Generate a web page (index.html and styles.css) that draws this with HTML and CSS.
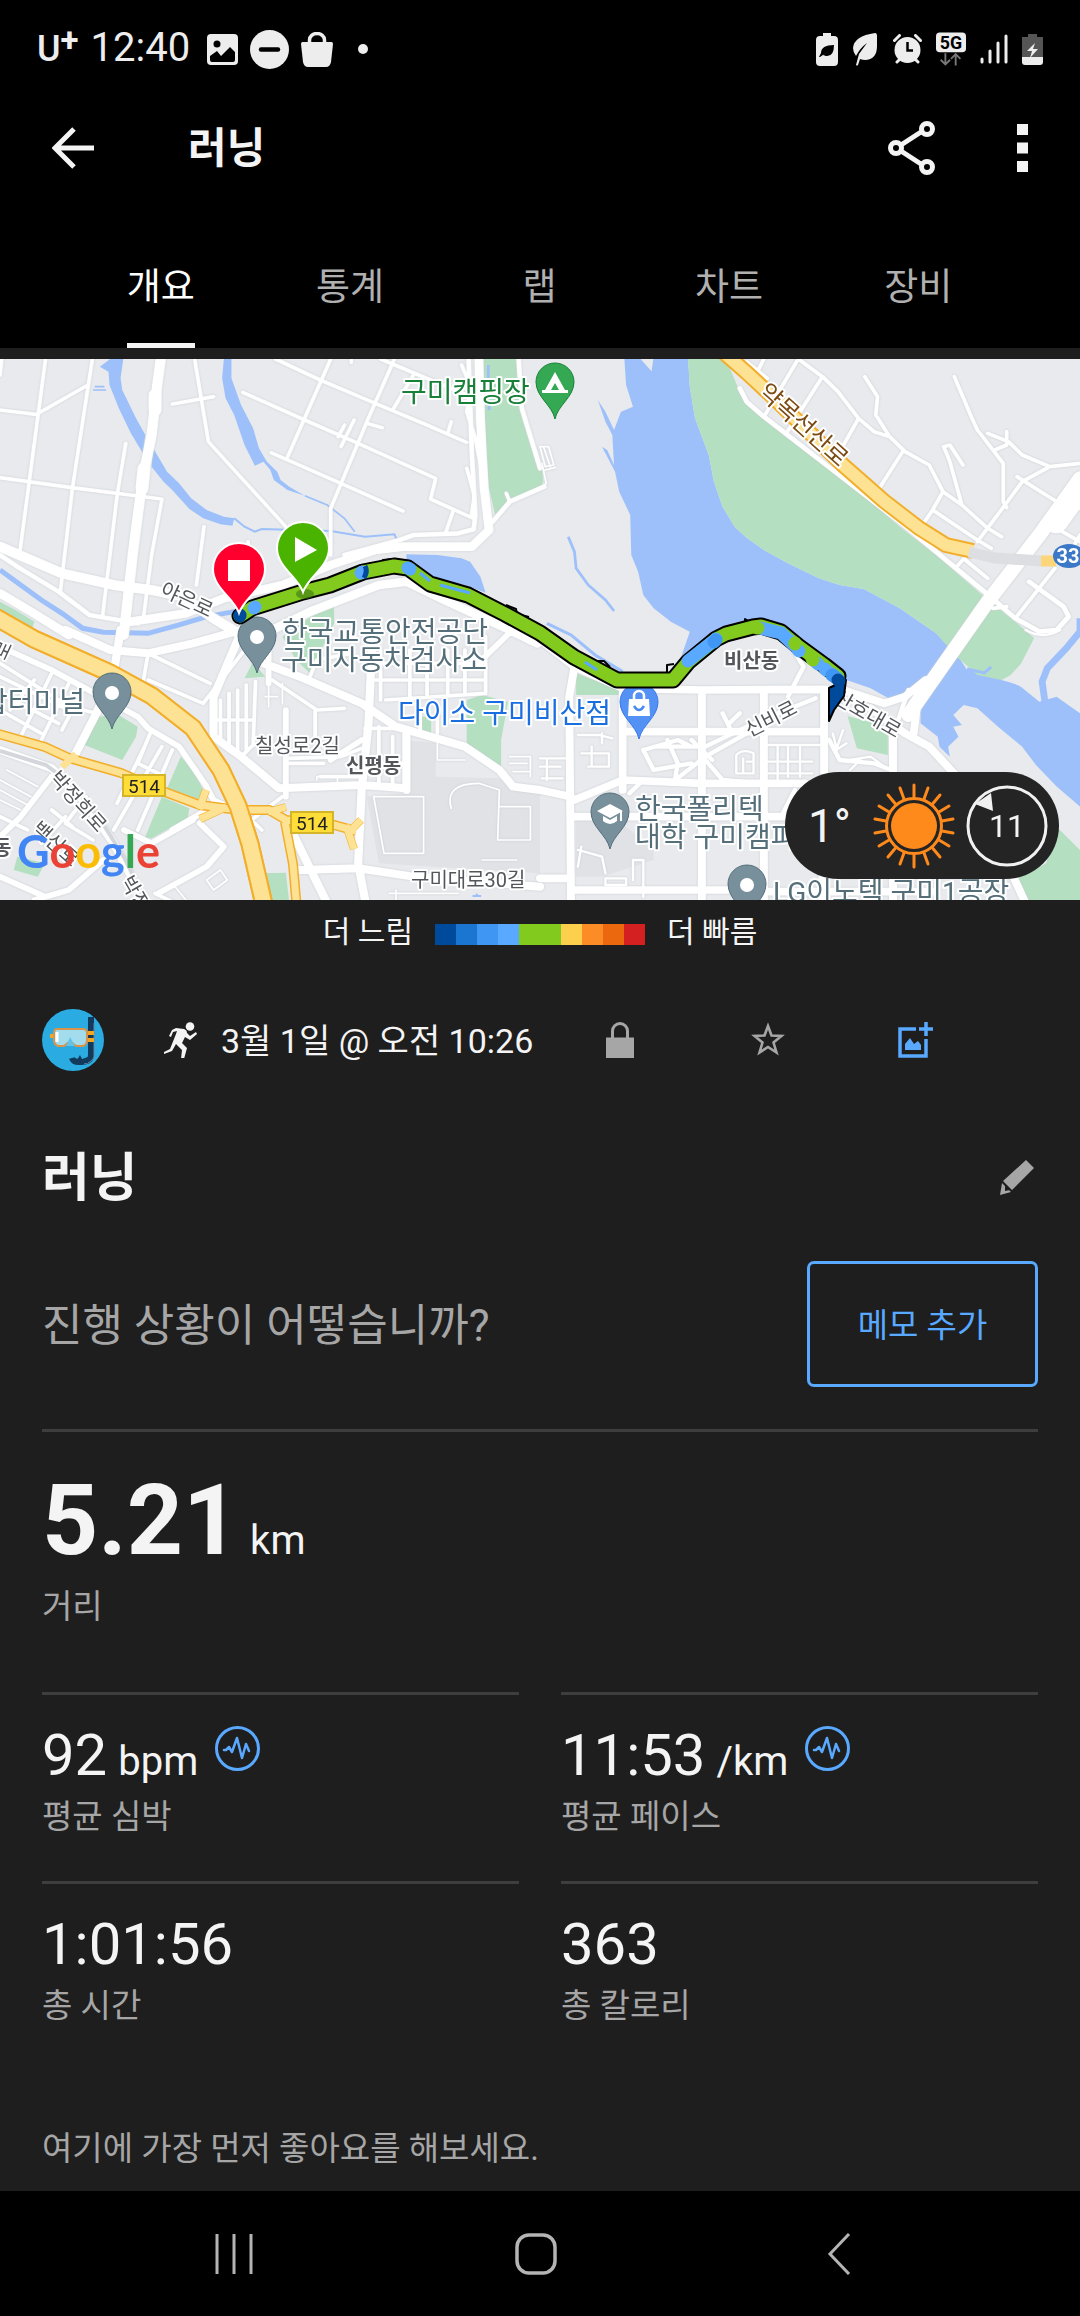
FILE: index.html
```html
<!DOCTYPE html>
<html lang="ko">
<head>
  <meta charset="UTF-8">
  <meta name="viewport" content="width=device-width, initial-scale=1">
  <title>러닝</title>
  <link rel="stylesheet" href="styles.css">
</head>
<body>
  <div class="status-bar">
    <div class="status-left">
      <span class="carrier">U<sup>+</sup></span>
      <span class="clock">12:40</span>
      <svg class="s-photo" width="31" height="31" viewBox="0 0 31 31"><rect width="31" height="31" rx="4" fill="#ededed"/><circle cx="10" cy="10" r="3.5" fill="#000"/><path d="M3 22l7-5 4 5 9-9 5 5v8q0 2-2 2H5q-2 0-2-2z" fill="#000"/></svg>
      <svg width="39" height="39" viewBox="0 0 39 39"><circle cx="19.500" cy="19.500" r="19.500" fill="#ededed"/><path d="M11 19.500h17" stroke="#000" stroke-width="4.500" stroke-linecap="round"/></svg>
      <svg width="32" height="35" viewBox="0 0 32 35"><path d="M8.500 13V8a7.500 6.500 0 0 1 15 0v5" fill="none" stroke="#ededed" stroke-width="3.500"/><path d="M1.500 10h29q1.500 0 1.500 2l-2 18q-1 5-5 5H7q-4 0-5-5L0 12q0-2 1.500-2z" fill="#ededed"/></svg>
      <span class="dot"></span>
    </div>
    <div class="status-right">
      <svg width="22" height="33" viewBox="0 0 22 33"><path d="M7 0h8v3h3q4 0 4 4v22q0 4-4 4H4q-4 0-4-4V7q0-4 4-4h3z" fill="#ededed"/><path d="M5 20q0-8 13-8 0 12-8 11l-3-1 7-5-10 7H3z" fill="#000"/></svg>
      <svg width="27" height="33" viewBox="0 0 27 33"><path d="M23 0q2 0 2 3v10q0 13-11 14-4 0-6-1l-2 6q-1 1-2 0L7 21l8-11q-7 5-11 13-3-4-3-8Q2 3 23 0z" fill="#ededed"/></svg>
      <svg width="29" height="30" viewBox="0 0 29 30"><circle cx="14.500" cy="16" r="13" fill="#ededed"/><path d="M1.500 6.500l5-5M27.500 6.500l-5-5M4 28l4-4M25 28l-4-4" stroke="#ededed" stroke-width="3" stroke-linecap="round"/><path d="M14.500 8v8.500H20" fill="none" stroke="#000" stroke-width="2.500"/></svg>
      <svg width="30" height="34" viewBox="0 0 32 35"><rect width="32" height="21" rx="4" fill="#ededed"/><text class="net-text" x="16" y="18" text-anchor="middle">5G</text><path d="M10 22v12m-5-5l5 5 5-5M21 35V23m-5 5l5-5 5 5" fill="none" stroke="#777" stroke-width="2"/></svg>
      <svg width="28" height="30" viewBox="0 0 28 30"><path d="M2 25v3M10 17v11M18 9v19M26 2v26" stroke="#ededed" stroke-width="3" stroke-linecap="round"/></svg>
      <svg width="21" height="31" viewBox="0 0 21 31"><path d="M6 0h9v3h6v20H0V3h6z" fill="#555"/><path d="M0 23h21v5q0 3-3 3H3q-3 0-3-3z" fill="#ededed"/><path d="M13 9l-8 8h5l-2 7 8-9h-5z" fill="#ededed"/></svg>
    </div>
  </div>

  <header class="app-bar">
    <button class="icon-btn" aria-label="뒤로">
      <svg width="42" height="42" viewBox="0 0 42 42"><path d="M42 21H4M22 2L3 21l19 19" fill="none" stroke="#f4f4f4" stroke-width="5"/></svg>
    </button>
    <h1>러닝</h1>
    <div class="app-actions">
      <button class="icon-btn" aria-label="공유">
        <svg width="47" height="54" viewBox="0 0 47 54"><g fill="none" stroke="#f4f4f4" stroke-width="5"><path d="M13 24l20-13M13 30l20 13"/><circle cx="8" cy="27" r="5.500"/><circle cx="39" cy="8" r="5.500"/><circle cx="39" cy="46" r="5.500"/></g></svg>
      </button>
      <button class="icon-btn" aria-label="더보기">
        <svg width="11" height="48" viewBox="0 0 11 48"><path d="M0 0h11v11H0zM0 18.500h11v11H0zM0 37h11v11H0z" fill="#f4f4f4"/></svg>
      </button>
    </div>
  </header>

  <nav class="tabs">
    <a class="tab" href="#overview"><span class="tab-text active">개요</span></a>
    <a class="tab" href="#stats"><span class="tab-text">통계</span></a>
    <a class="tab" href="#laps"><span class="tab-text">랩</span></a>
    <a class="tab" href="#charts"><span class="tab-text">차트</span></a>
    <a class="tab" href="#gear"><span class="tab-text">장비</span></a>
  </nav>

  <section class="map">
    <svg class="map-canvas" viewBox="0 0 1080 541" preserveAspectRatio="xMidYMid slice">
      <defs>
        <path id="pin" d="M0 36C-3 22-19 14-19-1a19 19 0 0 1 38 0C19 14 3 22 0 36z"/>
        <path id="marker" d="M0 43C-5 28-26 18-26-1a26 26 0 0 1 52 0C26 18 5 28 0 43z"/>
      </defs>
      <rect width="1080" height="541" fill="#e8eaed"/>

      <!-- water and parks, one group per map tile -->
      <g transform="translate(0 -4) scale(.3444 .3333)">
        <g class="water">
          <path d="M290 35L320 12h38l-8 58 5 35 40 85 27 50-7 55-35-60-35-75-27-70-3-40z"/>
          <path d="M445 280l40 70 35 35 35 45 45 35 50 20 30 5-5 22-35-4-50-18-40-28-50-57-25-25-35-45z"/>
          <path d="M650 12h22v58l28 80 35 70 17 60 23 40 30 30 10 25 25 20 45 27-50-17-40-30-10-30-20-25-25 12-30-62-30-90-25-50-10-60z"/>
          <path d="M1180 598l90 2 70 10 25 10 30 45 15 48-60-23-100-20-70-30z"/>
        </g>
        <g class="stream">
          <path d="M680 490l30 25 30 15 20-8 200 6 100 17 85-7 15 32" stroke-width="6"/>
          <path d="M885 422l65 28 50 40 30 40" stroke-width="5"/>
          <path d="M0 645l60 45 60 45 60 40 60 45 60 12 130 3 90-25 80-25 80-15" stroke-width="15"/>
          <path d="M270 105h38M275 95h28" stroke-width="5"/>
        </g>
        <g class="park">
          <path d="M0 740l50 28 50 32-10 30-30-10-60-45z"/>
          <path d="M880 800l90-55v60l-70 150-40-40-40-70z"/>
          <path d="M1402 12h103l10 148 60 180v50l-85 40-50 60-20-90-15-200z"/>
        </g>
        <path d="M1418 30v50M1420 145v20" class="stream" stroke-width="8"/>
      </g>
      <g transform="translate(540 -4) scale(.3444 .3333)">
        <path class="water" d="M245 12H430L435 95 450 190 490 300 505 380 530 455 565 515 600 548 650 585 720 625 810 670 870 690 940 702 1045 760 1150 835 1215 905 1240 945 1310 930 1340 975 1390 990 1450 1040 1500 1025 1568 1075V1355L1500 1295 1440 1230 1400 1175 1330 1115 1270 1060 1230 1050 1200 1080 1225 1110 1200 1115 1215 1145 1185 1175 1190 1205 1160 1175 1155 1145 1105 1105V1015L1030 1040 960 1000 890 975 750 860 620 830 500 850 410 905 435 830 380 800 330 760 300 720 285 650 265 600 262 480 230 410 218 350 180 275 195 285 215 330 210 240 190 200 168 135 190 170 215 225 235 170 270 155 250 90z"/>
        <path class="land" d="M292 12l32 37 5-37z"/>
        <path class="park" d="M430 12H540L580 110 650 190 850 345 1050 520 1150 600 1290 725 1380 800 1435 850 1385 950 1340 975 1270 960 1210 905 1150 835 1045 760 940 702 870 690 810 670 720 625 650 585 600 548 565 515 530 455 505 380 490 300 450 190 435 95z"/>
        <path class="land" d="M1435 850l133-65v35l-60 80-50 70-5 60-45-30-55-25 45-50z"/>
        <g class="stream">
          <path d="M82 545l18 45 5 50 35 50 50 45 25 33" stroke-width="8"/>
          <path d="M1568 790v40l-40 50-55 60-15 40 8 60" stroke-width="20"/>
          <path d="M1240 942l50 12 20-18M20 805l70 35 70 60 80 50" stroke-width="9"/>
        </g>
        <path class="park" d="M0 320l10 60-20 15z"/>
      </g>
      <g transform="translate(0 271) scale(.3444 .3333)">
        <path class="block" d="M1180 330l85 10v100l185 5 118 45v240l-468-30-35-200 115-10z"/>
        <g class="park">
          <path d="M710 145l25-50 35 45zM285 260l60-5 55 35-5 30-40 70-110-45zM525 380l35 40 35 70-10 20-100-35zM470 500l80 35-5 30-105 60h-20zM765 730l65-2 10 90h-62zM1355 210l45-15 75 20-20 115v90l-55-50-45-30zM1222 260h30v48h-30zM50 680l80 20-20 40-70-20z"/>
        </g>
        <path class="water" d="M1372 795h8l4-6 5 6h8v6h-25z"/>
      </g>
      <g transform="translate(540 271) scale(.3444 .3333)">
        <path class="block" d="M105 570h115l110 80v40l-150 50h-75z"/>
        <path class="park" d="M893 258l117 32v85l-90-20zM105 130l130 50-5 15H105zM1500 590l68 70v160h-155l-28-75 85-45z"/>
      </g>

      <!-- streets -->
      <g class="roads">
        <g transform="translate(0 -4) scale(.3444 .3333)">
          <path stroke-width="30" d="M468 0l-13 100-15 140-20 100-15 100-20 160-26 240M0 575l180 80 150 35 110 15 90 20 90 65 80 50"/>
          <path stroke-width="26" d="M380 800l160-25 110-45 170-40 140-60 130-45 80-10h200l50-50-15-130-10-200-5-195M780 830l120-60 200-80 80-10 120 60 170 80 90 45M0 715l90 55 110 70"/>
          <path stroke-width="38" d="M450 120v45M418 340l-6 60"/>
          <path stroke-width="14" d="M1000 600l160-45 40-15 130-5 45-12 5-43-10-180-10-300M1430 500l50-60 100-45M1505 0l10 160 53 180M0 600l50 35 120 75 90 70 140 25"/>
          <path stroke-width="11" d="M132 12L55 610M268 12l-58 388-35 310M0 165l105 13L255 90M0 368l210 30 260 34-30 168-25 200M5 12L0 60M365 265l-25 155-42 360M592 515l-22 175M500 147l120-22M565 12l40 248 225 255M800 12l130 63 160 70 150 65 115 52M705 112l180 83 155 70 225 105-15 62 125 58M787 293l203 92 180 83M1105 12l250 108M960 12L835 305M1145 12l-80 188-105 260v140M1200 60l-60 105M1028 195l-38 80M1000 210l-18 35M1065 205l45 13M1340 30l25 60-10 80 25 80 15 80M1315 470l-20 60M1310 200l-10 35M1355 340l22 80-8 60M1470 415l10 25M720 560v30M1020 12v10"/>
        </g>
        <g transform="translate(540 -4) scale(.3444 .3333)">
          <path stroke-width="42" d="M1568 370l-118 170-150 200-170 250-60 90"/>
          <path stroke-width="70" d="M1568 400l-70 100"/>
          <path stroke-width="14" d="M580 100l20 40 50 45 200 160 200 160 240 205 90 80 70 40 50-5 35-40-15-30-100-75"/>
          <path stroke-width="11" d="M650 12l-20 40M745 20l-95 165M600 20l60 50M750 12l70 53 45 45 60 80 45 40 45 15 45 45 70 40 40 80 55 40 75 70 40 25M820 65L715 235M925 190l-55 100M1053 290l-68 110M1170 410l-30 55-30 45M943 65l37 60-5 55 40 65M1203 65l47 115 20 45 75 100v115l10 18M1225 450l-35-130-18-45 18-5 38 60M1300 235l60 25 40 40 80 35 88-10M1355 230v40l-35 15M1480 335l-80 45-50 70-80 110M1140 465l130 90 40 25M1385 365l115 75 68 20M1500 520l68 40M1495 640l-115 150M1568 540l-40 70M1210 635l30-35M1235 615l65 55M1315 760l40-5"/>
          <path stroke-width="5" d="M0 275h25l15 55-25 5zM10 275l20 60M15 345l30-8M0 400l18-15-12-60"/>
        </g>
        <g transform="translate(0 271) scale(.3444 .3333)">
          <path stroke-width="24" d="M350 0l-20 130-50 120-65 130M190 0l130 60 110 10 130-30L700 0M690 30l-70 170v120l80 60 110 95 240-10 130 10M740 90l130 50 180 80 100 70 200 60 100 70 40 50 78 10M1080 50l-10 230-20 200-10 220 20 110M1180 310v170M870 720l170-5 160 25 368 30M850 610l100 210M0 360l150 55 100 105 80 120 30 60 60 110"/>
          <path stroke-width="17" d="M0 50l150 70 250 140 30 35 90 55 80 120 20 40 100 50M830 240v260M150 440l-90 120-60 60M360 600l80 40 120-70M580 580l70 70-50 60-140 80M0 740l130 60M300 690l-100 90-100 30M780 60v100M1568 0l-90 10-70 70M1050 330l-90 60M600 540l-100 60"/>
          <path stroke-width="11" d="M430 70l-15 90M430 150l160 70 30-40 120-160M610 160L440 75M640 210v130M665 190v170M690 180v190M715 165v195M742 155l-7 190-35 35M625 270h110M790 150l130 90 80-5M915 240v80M1410 20v170l-290 20M1105 60v150M1190 60v140M1240 60v140M1300 60v140M1350 60v135M1070 100h330M1080 150h325M900 140l20-50 100-20M0 100l200 130 80 20M0 140l200 100M0 190l170 90M0 240l120 70M100 150L30 240M150 130L60 320M200 160l-80 170M240 180l-60 120M470 350L330 600M500 360L400 600M420 350l-80 170M0 560l80 40M440 300l-40 100 60 30M1100 290v180M1140 320v150M1060 295h120M1080 400h100M840 400h100M840 385l150-5 60-25M930 440h110M250 500l-60 80 80 50M150 540l60 50M190 560l-70 80M450 790l60 30M1220 250v60M1270 230v80M820 500l-90 70 30 30"/>
          <path stroke-width="5" d="M1085 500h145v170h-115zM1450 480l-5 150h95v-100h-90M1400 690h100M1310 535q-20-75 80-75l60 20M1480 380h60v60M1480 400h50M1490 425h50M1270 340v50h80M820 160v60M780 170v60M770 200h35M830 240v60M600 750l40-30 20 30-40 30zM500 760l40 50M20 420l90 50M0 450l90 50M0 480l80 45M0 510l60 30M1150 780v30M1130 790h200M920 450v-10h60v20"/>
        </g>
        <g transform="translate(540 271) scale(.3444 .3333)">
          <path stroke-width="23" d="M0 30l100 80 140 65 230 5 360-2M100 110L85 200l5 620M240 190v290M470 190v630M650 190v630M825 180v260M1025 320v120M240 305h580M100 510l140-60 230 10h300M0 480l90 20M100 560h640M90 780h470M0 745h90M880 180l120 40 60-20 60-50M960 235l100 75 70 40 90 100M1100 180l-15 130M650 785h500M820 700v110M1025 700v110M1370 730l40 90"/>
          <path stroke-width="13" d="M340 350h140l140-70 180-75M380 460l100-80 120-70M480 390l50 60 110 10M300 360l30 60 110-20M370 330l30 70-10 60M260 490l30-30M730 50l35 60-45 90M530 250l20 40v20M580 250l-30 30M700 560l40-80M840 330l30 60 100 10 50 20M1070 180l-40 120M440 330l60 60M300 360l100-30 40 20"/>
          <path stroke-width="7" d="M660 345h160M690 350v100M720 350v90M755 350v90M660 395h130M660 430h130M570 375q20-20 50-5v60h-50zM590 385v45M600 395h20M0 385h75M0 410h60M5 445h60M20 390v60M110 315h60l40 10M180 310v30M120 370h80v40h-60M150 350v60M110 660l70 20 10 50M270 690h30v110M270 690v60M190 745h60v20h-60zM850 310l10 40M880 300l-20 60 30-20M900 390l60-10 40 30M900 420l30-30M120 650l-10 60M1410 0q50 30 100 0"/>
        </g>
      </g>
      <path class="rail" d="M70 424L100 460l25 40 22 45M0 392l46 14 24 18"/>

      <!-- highways -->
      <g class="highway-edge">
        <path d="M722-8l25 22 27 25 69 67 41 36 35 27 27 17 27 6" stroke-width="16"/>
        <path d="M-10 255L34 280l76 34 42 23 41 32 28 42 17 36 12 38 15 65" stroke-width="19"/>
        <path d="M-5 374l50 14 24 11 52 15 44 19 35 13 38 5h31l17 10 48 5 22 6M285 463l8 42 4 46" stroke-width="10"/>
        <path d="M199 450l7-19M200 460l26-12M268 453l18-5M353 469l8-8M346 466l8 24" stroke-width="8"/>
      </g>
      <g class="highway">
        <path d="M722-8l25 22 27 25 69 67 41 36 35 27 27 17 27 6" stroke-width="12"/>
        <path d="M-5 374l50 14 24 11 52 15 44 19 35 13 38 5h31l17 10 48 5 22 6M285 463l8 42 4 46" stroke-width="7"/>
        <path d="M199 450l7-19M200 460l26-12M268 453l18-5M353 469l8-8M346 466l8 24M62 408l14-13" stroke-width="7"/>
      </g>
      <path d="M-10 255L34 280l76 34 42 23 41 32 28 42 17 36 12 38 15 65" fill="none" stroke="#f2ae2a" stroke-width="19"/>
      <path d="M-10 255L34 280l76 34 42 23 41 32 28 42 17 36 12 38 15 65" fill="none" stroke="#fde293" stroke-width="15"/>
      <path d="M969 193l26 6 47 3" fill="none" stroke="#dcdee1" stroke-width="11"/>
      <path d="M1041 202h15" fill="none" stroke="#fcd678" stroke-width="11"/>

      <!-- place names -->
      <g class="labels">
        <text class="poi green" x="401" y="43">구미캠핑장</text>
        <text class="poi grey" x="282" y="283">한국교통안전공단</text>
        <text class="poi grey" x="281" y="311">구미자동차검사소</text>
        <text class="poi grey" x="85" y="353" text-anchor="end">합터미널</text>
        <text class="poi blue" x="398" y="364">다이소 구미비산점</text>
        <text class="poi grey" x="635" y="460">한국폴리텍</text>
        <text class="poi grey" x="635" y="488">대학 구미캠퍼스</text>
        <text class="poi grey" x="773" y="543">LG이노텍 구미1공장</text>
        <text class="street" x="255" y="394">칠성로2길</text>
        <text class="street" x="411" y="528">구미대로30길</text>
        <text class="street town" x="346" y="414">신평동</text>
        <text class="street town" x="724" y="309">비산동</text>
        <text class="street town" x="-7" y="496">동</text>
        <text class="street" text-anchor="middle" transform="translate(184 247) rotate(25)">야은로</text>
        <text class="street" text-anchor="middle" transform="translate(774 366) rotate(-27)">신비로</text>
        <text class="street" text-anchor="middle" transform="translate(864 361) rotate(30)">산호대로</text>
        <text class="street" text-anchor="middle" transform="translate(73 447) rotate(48)">박정희로</text>
        <text class="street" text-anchor="middle" transform="translate(51 490) rotate(42)">백산로</text>
        <text class="street" transform="translate(120 522) rotate(60)">박정희로</text>
        <text class="street" text-anchor="middle" transform="translate(9 294) rotate(-65)">로</text>
        <text class="highway-name" text-anchor="middle" transform="translate(798 72) rotate(42)">약목선산로</text>
      </g>
      <g class="shield">
        <rect x="123" y="416" width="42" height="21"/><text x="144" y="434">514</text>
        <rect x="291" y="453" width="42" height="21"/><text x="312" y="471">514</text>
      </g>
      <ellipse cx="1069" cy="197" rx="16" ry="12" fill="#3b78c7"/>
      <text class="shield-blue" x="1068" y="204">33</text>

      <!-- place pins -->
      <g transform="translate(257 278)"><use href="#pin" class="pin-grey"/><circle r="7" fill="#fff"/></g>
      <g transform="translate(112 334)"><use href="#pin" class="pin-grey"/><circle r="7" fill="#fff"/></g>
      <g transform="translate(747 526)"><use href="#pin" class="pin-grey"/><circle r="7" fill="#fff"/></g>
      <g transform="translate(610 454)"><use href="#pin" class="pin-grey"/><path d="M-13-2L0-9l13 7L0 5zM-7 3l7 4 7-4v5q-7 6-14 0zM10-2h2v10h-2z" fill="#fff"/></g>
      <g transform="translate(555 24)"><use href="#pin" class="pin-green"/><path d="M-13 10v-3h3L0-11 10 7h3v3zM-4 7h8L0 0z" fill="#fff" fill-rule="evenodd"/></g>
      <g transform="translate(639 344)"><use href="#pin" class="pin-blue"/><path d="M-10-4h20l1 17h-22z" fill="#fff"/><path d="M-5-4v-3a5 5 0 0 1 10 0v3" fill="none" stroke="#fff" stroke-width="2.500"/><path d="M-5 3q5 8 10 0" fill="none" stroke="#4a8af0" stroke-width="2.500"/></g>

      <!-- recorded route, coloured by pace -->
      <g class="route">
        <path class="route-edge" d="M240 257l12-8 51-16 27-7 33-13 31-6 14 2 22 16 38 11 37 19 35 19 34 24 43 23h56l15-18 28-23 10-5 27-7 8-1 20 6 17 14 26 19 14 11"/>
        <path class="route-noise" d="M745 268v-8l9 5 10 4M392 200l-9 1-4 4-9-1-5 5-8-1M561 282l6 8 12 8M667 314v-8l7-1M436 220l8 2 3 5 12-1 8 4M506 246l10 4 1 5 12 3M596 302h8l6 6M700 284l6-1 4-5 6-1"/>
        <path d="M829 329l17-8-2 16-10 14-5 11z" fill="#004a9c" stroke="#000" stroke-width="2"/>
        <path stroke="#82ca1e" d="M240 257l12-8 51-16 27-7 33-13 31-6 14 2 22 16 38 11 37 19 35 19 34 24 43 23h56l15-18 28-23 10-5 27-7 8-1 20 6 17 14 26 19 14 11"/>
        <path stroke="#58a9ff" d="M254 249l1-1M361 214l1-1M408 209l2 1M688 302l28-22M760 269l21 5 14 13M798 291l1 1M817 304l1 1M825 310l1 1M832 315l6 5"/>
        <path stroke="#82ca1e" d="M795 284v1M812 300l1 1M757 269h1"/>
        <path stroke="#4096f3" d="M714 283l2-2M832 316l3 2"/>
        <path stroke="#004a9c" d="M240 256v1M838 321l1 1"/>
        <path d="M365 207q3 5-1 12" fill="none" stroke="#004a9c" stroke-width="5"/>
        <path d="M420 214l10 8M440 226l30 8M585 303l12 8" fill="none" stroke="#58a9ff" stroke-width="3"/>
      </g>
      <ellipse cx="305" cy="235" rx="9" ry="5" fill="#3c7312" opacity=".6"/>
      <g transform="translate(303 190)"><use href="#marker" fill="#4ab300" stroke="#fff" stroke-width="2"/><path d="M-8-12v25l22-12z" fill="#fff"/></g>
      <g transform="translate(239 211)"><use href="#marker" fill="#ff002e" stroke="#fff" stroke-width="2"/><path d="M-11-10h22v21h-22z" fill="#fff"/></g>

      <text class="google" x="17" y="509"><tspan fill="#4285f4">G</tspan><tspan fill="#ea4335">o</tspan><tspan fill="#fbbc05">o</tspan><tspan fill="#4285f4">g</tspan><tspan fill="#34a853">l</tspan><tspan fill="#ea4335">e</tspan></text>
    </svg>

    <div class="weather">
      <span class="temp">1°</span>
      <svg width="82" height="86" viewBox="-41 -43 82 86">
        <circle r="23" fill="#ff8a1c"/>
        <circle r="27.500" fill="none" stroke="#ff8a1c" stroke-width="3"/>
        <path d="M0-29V-41M0 29V41M10-27L14-38M-10-27L-14-38M10 27L14 38M-10 27L-14 38M18.500-22L26-31M-18.500-22L-26-31M18.500 22L26 31M-18.500 22L-26 31M25-14L35-20M-25-14L-35-20M25 14L35 20M-25 14L-35 20M28-5L39-7M-28-5L-39-7M28 5L39 7M-28 5L-39 7" stroke="#ff8a1c" stroke-width="3" stroke-linecap="round"/>
      </svg>
      <div class="wind">
        <svg class="wind-ring" width="82" height="82" viewBox="0 0 82 82"><circle cx="41" cy="41" r="39" fill="none" stroke="#f1f1f1" stroke-width="3"/><path d="M9 19L25 8l2 18z" fill="#f1f1f1"/></svg>
        <span>11</span>
      </div>
    </div>
  </section>

  <div class="legend">
    <span>더 느림</span>
    <div class="scale">
      <i class="p1"></i><i class="p2"></i><i class="p3"></i><i class="p4"></i><i class="p5"></i><i class="p5"></i><i class="p6"></i><i class="p7"></i><i class="p8"></i><i class="p9"></i>
    </div>
    <span>더 빠름</span>
  </div>

  <main class="content" id="overview">
    <div class="meta">
      <svg class="avatar" width="62" height="62" viewBox="0 0 62 62">
        <circle cx="31" cy="31" r="31" fill="#2aace3"/>
        <path d="M49 8v38q0 8-12 7-6 0-7-4" fill="none" stroke="#123a5c" stroke-width="6"/>
        <path d="M52 14v34q-3 6-10 7" fill="none" stroke="#5c87a5" stroke-width="1"/>
        <path d="M30 50l5 1 3-5 2 4 6-2v6H32z" fill="#123a5c"/>
        <path d="M8 27h4M46 24h6M46 31h6" stroke="#f5a623" stroke-width="4"/>
        <path d="M15 20h26q4 0 4 4v8q-1 5-5 5h-6l-6-5-6 5h-5q-4 0-5-5v-8q0-4 3-4z" fill="#a3dcec" stroke="#d9944a" stroke-width="2"/>
        <path d="M15 23v10" stroke="#fff" stroke-width="3"/>
        <path d="M28 28l5 9h-9z" fill="#62c3e6"/>
      </svg>
      <svg class="runner" width="33" height="36" viewBox="0 0 33 36">
        <circle cx="26" cy="4.500" r="4.300" fill="#f4f4f4"/>
        <path d="M12 6l8 1q3 1 3 4l3 3 6-4 1 2-7 6-5-3-3 6 5 5-3 11h-3l1-9-6-6-4 7-8 3v-2l6-3 6-15 1-3-4 1-2 5-2-1 3-6z" fill="#f4f4f4"/>
      </svg>
      <span class="date">3월 1일 @ 오전 10:26</span>
      <div class="meta-actions">
        <button class="icon-btn" aria-label="비공개">
          <svg width="28" height="36" viewBox="0 0 28 36"><path d="M0 15.500h28V36H0z" fill="#a6a6a6"/><path d="M6.500 16V9a7.500 7.500 0 0 1 15 0v7" fill="none" stroke="#a6a6a6" stroke-width="3"/></svg>
        </button>
        <button class="icon-btn" aria-label="즐겨찾기">
          <svg width="34" height="34" viewBox="0 0 34 34"><path d="M17 4l3.500 9.500 10 .5-8 6.500 3 10L17 25l-8.500 5.500 3-10-8-6.500 10-.5z" fill="none" stroke="#a6a6a6" stroke-width="2.600"/></svg>
        </button>
        <button class="icon-btn" aria-label="사진 추가">
          <svg width="36" height="36" viewBox="0 0 36 36"><path d="M18 7H2v27h26V17" fill="none" stroke="#58a9ff" stroke-width="3.500"/><path d="M28 0v14M21 7h14" stroke="#58a9ff" stroke-width="3.500"/><path d="M7 28v-6l5-6 4 6 4-3 3 4v5z" fill="#58a9ff"/></svg>
        </button>
      </div>
    </div>

    <div class="title-row">
      <h2>러닝</h2>
      <button class="icon-btn" aria-label="제목 편집">
        <svg width="34" height="35" viewBox="0 0 34 35"><path d="M26 0l8 8-22 22-9-9zM2 23l9 9-11 3z" fill="#a6a6a6"/><path d="M5 25l5 5-5 1z" fill="#1e1e1e"/></svg>
      </button>
    </div>

    <div class="note-row">
      <p>진행 상황이 어떻습니까?</p>
      <button class="note-btn">메모 추가</button>
    </div>

    <div class="stats">
      <div class="stat main-stat">
        <div class="value">5.21 <small>km</small></div>
        <div class="label">거리</div>
      </div>
      <div class="stat">
        <div class="value">92 <small>bpm</small>
          <svg class="pulse" width="45" height="45" viewBox="0 0 45 45"><circle cx="22.500" cy="22.500" r="21" fill="none" stroke="#58a9ff" stroke-width="3"/><path d="M9 24h2l3-3 3 5 5-14 5 20 4-14 3 7" fill="none" stroke="#58a9ff" stroke-width="2.500" stroke-linecap="round" stroke-linejoin="round"/></svg>
        </div>
        <div class="label">평균 심박</div>
      </div>
      <div class="stat">
        <div class="value">11:53 <small>/km</small>
          <svg class="pulse" width="45" height="45" viewBox="0 0 45 45"><circle cx="22.500" cy="22.500" r="21" fill="none" stroke="#58a9ff" stroke-width="3"/><path d="M9 24h2l3-3 3 5 5-14 5 20 4-14 3 7" fill="none" stroke="#58a9ff" stroke-width="2.500" stroke-linecap="round" stroke-linejoin="round"/></svg>
        </div>
        <div class="label">평균 페이스</div>
      </div>
      <div class="stat">
        <div class="value">1:01:56</div>
        <div class="label">총 시간</div>
      </div>
      <div class="stat">
        <div class="value">363</div>
        <div class="label">총 칼로리</div>
      </div>
    </div>

    <p class="likes">여기에 가장 먼저 좋아요를 해보세요.</p>
  </main>

  <footer class="nav-bar">
    <button class="icon-btn" aria-label="최근 앱">
      <svg width="38" height="42" viewBox="0 0 38 42"><path d="M2 1v40M19 1v40M36 1v40" stroke="#b4b4b4" stroke-width="3"/></svg>
    </button>
    <button class="icon-btn" aria-label="홈">
      <svg width="42" height="42" viewBox="0 0 42 42"><rect x="2" y="2" width="38" height="38" rx="12" fill="none" stroke="#b4b4b4" stroke-width="3.500"/></svg>
    </button>
    <button class="icon-btn" aria-label="뒤로">
      <svg width="24" height="42" viewBox="0 0 24 42"><path d="M22 1L3 21l19 20" fill="none" stroke="#b4b4b4" stroke-width="3"/></svg>
    </button>
  </footer>
</body>
</html>
```

FILE: styles.css
```css
* {
  box-sizing: border-box;
}
body {
  display: flex;
  flex-direction: column;
  min-height: 100vh;
  margin: 0;
  background-color: #1e1e1e;
  color: #f4f4f4;
  font-family: Roboto, 'Noto Sans CJK KR', sans-serif;
}
h1, h2, p {
  margin: 0;
}
svg {
  display: block;
  flex: none;
}
.icon-btn {
  display: flex;
  padding: 0;
  border: 0;
  background: none;
}

/* status bar */
.status-bar {
  display: flex;
  justify-content: space-between;
  height: 98px;
  padding: 0 37px;
  background-color: #000;
  color: #ededed;
}
.status-left, .status-right {
  display: flex;
  align-items: center;
}
.status-left {
  gap: 12px;
}
.status-right {
  gap: 14px;
}
.carrier {
  font-size: 36px;
  font-weight: 500;
  line-height: 40px;
}
.carrier sup {
  font-size: 33px;
  font-weight: 700;
  line-height: 0;
  vertical-align: 10px;
}
.clock {
  font-size: 40px;
  line-height: 44px;
  padding-bottom: 2px;
}
.s-photo {
  margin-left: 5px;
}
.dot {
  width: 10px;
  height: 10px;
  margin-left: 13px;
  border-radius: 50%;
  background-color: #ededed;
}
.net-text {
  font-size: 19px;
  font-weight: 700;
}

/* app bar */
.app-bar {
  display: flex;
  align-items: center;
  height: 100px;
  padding: 0 52px;
  background-color: #000;
}
.app-bar h1 {
  margin-left: 94px;
  padding-top: 2px;
  font-size: 42px;
  font-weight: 700;
  line-height: 60px;
}
.app-actions {
  display: flex;
  align-items: center;
  gap: 82px;
  margin-left: auto;
}

/* tabs */
.tabs {
  display: flex;
  height: 161px;
  padding: 65px 67px 0 66px;
  border-bottom: 11px solid #1e1e1e;
  background-color: #000;
}
.tab {
  flex: 1;
  text-align: center;
  text-decoration: none;
  color: #b0b0b0;
}
.tab-text {
  display: inline-block;
  padding-bottom: 30px;
  font-size: 37px;
  line-height: 50px;
}
.active {
  border-bottom: 5px solid #f4f4f4;
  color: #fff;
}

/* map */
.map {
  position: relative;
}
.map-canvas {
  width: 100%;
  aspect-ratio: 1080 / 541;
}
.water {
  fill: #9dc0fa;
}
.stream {
  fill: none;
  stroke: #9dc0fa;
}
.park {
  fill: #b5dfc1;
}
.land {
  fill: #e8eaed;
}
.block {
  fill: #e0e2e6;
}
.roads {
  fill: none;
  stroke: #fff;
  stroke-linecap: round;
  stroke-linejoin: round;
  filter: drop-shadow(0 0 1px #c8ccd2);
}
.rail {
  fill: none;
  stroke: #d3d6db;
  stroke-width: 4;
}
.highway-edge {
  fill: none;
  stroke: #f2ae2a;
}
.highway {
  fill: none;
  stroke: #fde293;
}
.labels text {
  stroke: #fff;
  stroke-width: 4px;
  stroke-linejoin: round;
  paint-order: stroke;
}
.poi {
  font-size: 28px;
}
.street {
  font-size: 20px;
  fill: #53575c;
}
.town {
  font-weight: 700;
}
.highway-name {
  font-size: 24px;
  fill: #7b4a12;
}
.green {
  fill: #188038;
}
.grey {
  fill: #546e7a;
}
.blue {
  fill: #1a6fe0;
}
.shield rect {
  fill: #ffdd38;
  stroke: #d4b52a;
  stroke-width: 2;
}
.shield text {
  font-size: 19px;
  text-anchor: middle;
  fill: #202124;
}
.shield-blue {
  font-size: 20px;
  font-weight: 700;
  text-anchor: middle;
  fill: #fff;
}
.pin-grey {
  fill: #78909c;
  stroke: #546e7a;
}
.pin-green {
  fill: #34a853;
  stroke: #188038;
}
.pin-blue {
  fill: #5491f5;
  stroke: #3b78e7;
}
.route path {
  stroke-linejoin: round;
}
.route path[stroke^="#"]:not([stroke-width]) {
  fill: none;
  stroke-width: 13;
  stroke-linecap: round;
}
.route .route-edge {
  fill: none;
  stroke: #000;
  stroke-width: 17;
  stroke-linecap: round;
}
.route-noise {
  fill: none;
  stroke: #000;
  stroke-width: 2;
}
.google {
  font-family: Lato, sans-serif;
  font-size: 45px;
  font-weight: 700;
}

.weather {
  position: absolute;
  right: 21px;
  bottom: 21px;
  display: flex;
  align-items: center;
  gap: 11px;
  height: 107px;
  padding: 0 11px 0 23px;
  border-radius: 54px;
  background-color: #242424;
}
.temp {
  width: 54px;
  font-size: 46px;
}
.wind {
  position: relative;
  display: flex;
  align-items: center;
  justify-content: center;
  width: 82px;
  height: 82px;
  font-size: 32px;
}
.wind-ring {
  position: absolute;
  inset: 0;
}

/* pace legend */
.legend {
  display: flex;
  align-items: center;
  justify-content: center;
  gap: 22px;
  height: 68px;
  font-size: 30px;
  line-height: 40px;
}
.legend span {
  padding-bottom: 4px;
}
.scale {
  display: flex;
}
.scale i {
  width: 21px;
  height: 21px;
}
.p1 { background-color: #004a9c; }
.p2 { background-color: #1b76d1; }
.p3 { background-color: #4096f3; }
.p4 { background-color: #58a9ff; }
.p5 { background-color: #82ca1e; }
.p6 { background-color: #fccf4c; }
.p7 { background-color: #fb8c26; }
.p8 { background-color: #eb680e; }
.p9 { background-color: #d42020; }

/* activity */
.content {
  padding: 36px 42px 20px;
}
.meta {
  display: flex;
  align-items: center;
  height: 72px;
}
.runner {
  margin: 0 24px 0 60px;
}
.date {
  padding-bottom: 4px;
  font-size: 34px;
}
.meta-actions {
  display: flex;
  margin: 0 48px 0 auto;
}
.meta-actions .icon-btn {
  justify-content: center;
  width: 148px;
}
.title-row {
  display: flex;
  align-items: center;
  justify-content: space-between;
  margin-top: 65px;
  padding-right: 4px;
}
.title-row h2 {
  padding-top: 4px;
  font-size: 52px;
  font-weight: 700;
  line-height: 68px;
}
.note-row {
  display: flex;
  align-items: center;
  justify-content: space-between;
  margin: 48px 0 42px;
  color: #a6a6a6;
  font-size: 44px;
}
.note-row p {
  padding-bottom: 4px;
}
.note-btn {
  width: 231px;
  height: 126px;
  padding-bottom: 4px;
  border: 3px solid #58a9ff;
  border-radius: 7px;
  background: none;
  color: #58a9ff;
  font: inherit;
  font-size: 33px;
}

.stats {
  display: grid;
  grid-template-columns: 1fr 1fr;
  column-gap: 42px;
}
.stat {
  padding: 25px 0 42px;
  border-top: 3px solid #3e3e3e;
}
.value {
  display: flex;
  align-items: baseline;
  gap: 11px;
  height: 70px;
  font-size: 58px;
  line-height: 70px;
}
.value small {
  font-size: 40px;
}
.pulse {
  align-self: flex-start;
  margin: 6px 0 0 6px;
}
.label {
  margin-top: 5px;
  color: #a6a6a6;
  font-size: 33px;
  line-height: 44px;
}
.main-stat {
  grid-column: 1 / -1;
  padding: 39px 0 0;
  margin-bottom: 63px;
}
.main-stat .value {
  height: 100px;
  font-size: 98px;
  font-weight: 700;
  line-height: 100px;
}
.main-stat small {
  font-weight: 400;
}
.main-stat .label {
  margin-top: 14px;
}
.likes {
  margin-top: 57px;
  color: #a6a6a6;
  font-size: 33px;
  line-height: 44px;
}

/* system navigation */
.nav-bar {
  display: flex;
  flex: 1;
  align-items: center;
  min-height: 126px;
  padding: 0 90px 0 83px;
  background-color: #000;
}
.nav-bar .icon-btn {
  flex: 1;
  justify-content: center;
}
```
